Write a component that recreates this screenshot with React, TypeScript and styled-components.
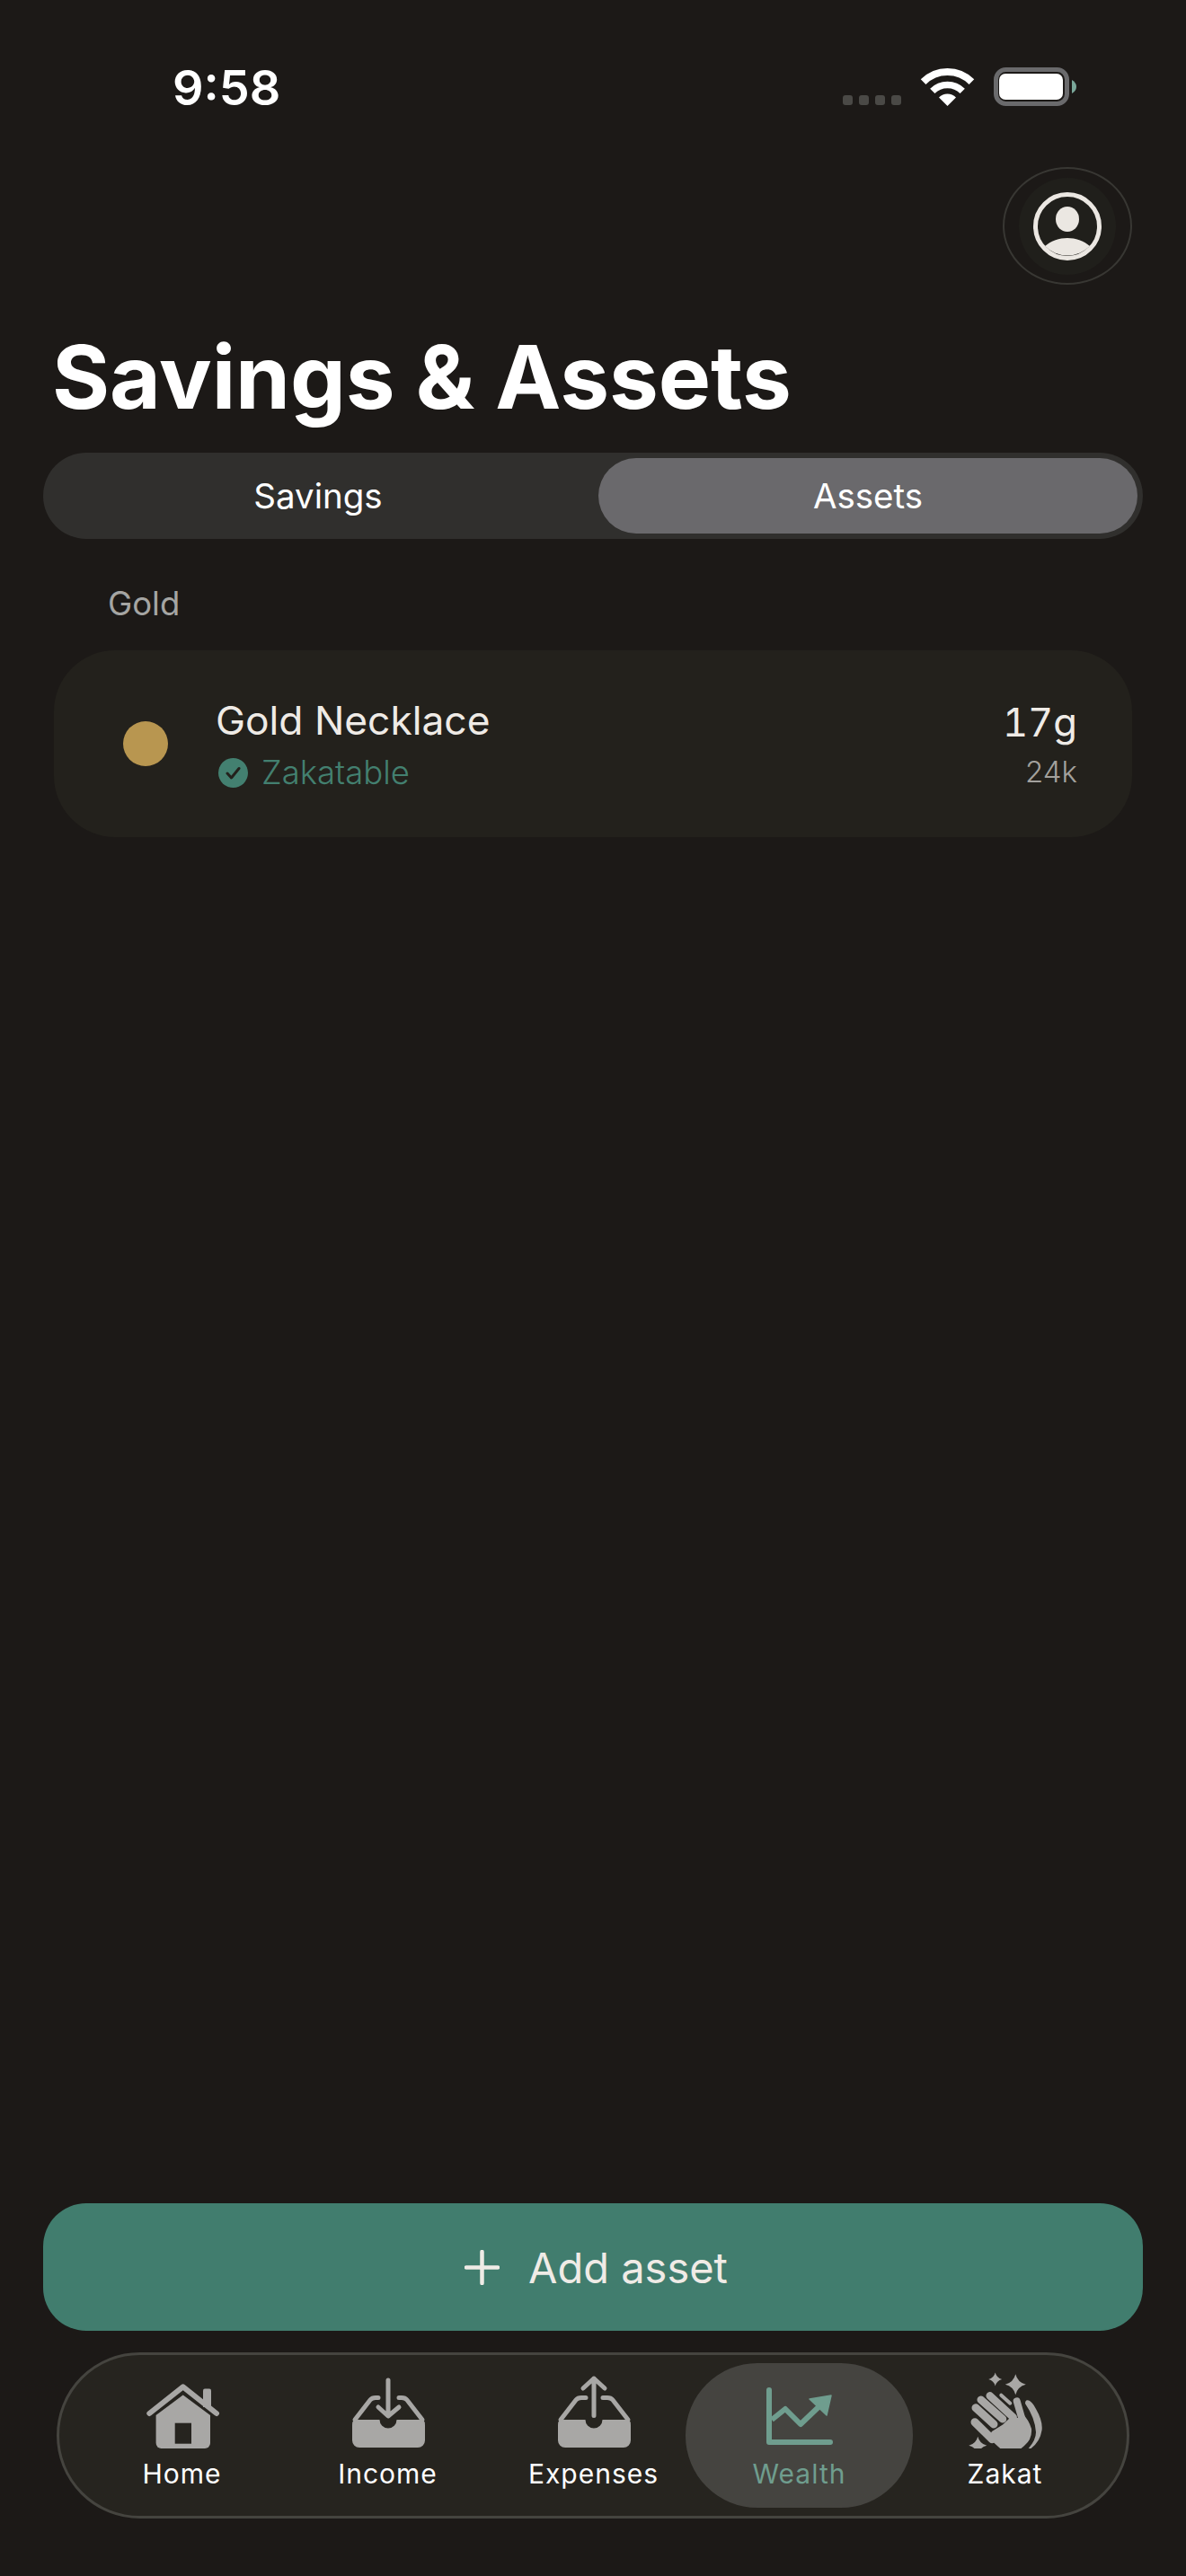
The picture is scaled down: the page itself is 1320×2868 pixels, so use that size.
import React from 'react';
import styled, { createGlobalStyle } from 'styled-components';

const GlobalStyle = createGlobalStyle`
  html, body {
    margin: 0;
    padding: 0;
    background: #1c1917;
  }
  * {
    box-sizing: border-box;
  }
`;

const Page = styled.div`
  width: 1320px;
  height: 2868px;
  display: flex;
  flex-direction: column;
  background: #1c1917;
  font-family: Inter, "Noto Sans", sans-serif;
  overflow: hidden;
`;

const StatusBar = styled.div`
  height: 186px;
  padding: 75px 122px 0 192px;
  display: flex;
  justify-content: space-between;
  align-items: flex-start;
`;

const Time = styled.div`
  font-size: 54px;
  font-weight: 600;
  line-height: 46px;
  color: #fff;
`;

const StatusIcons = styled.div`
  display: flex;
  align-items: flex-end;
  gap: 23px;
  height: 43px;
`;

const SignalDots = styled.div`
  display: flex;
  gap: 7px;
  margin-bottom: 1px;
`;

const SignalDot = styled.span`
  width: 11px;
  height: 11px;
  border-radius: 3px;
  background: #4a4946;
`;

const TopRow = styled.div`
  display: flex;
  justify-content: flex-end;
  padding-right: 60px;
`;

const ProfileButton = styled.div`
  width: 144px;
  height: 131px;
  border-radius: 50%;
  border: 2px solid #383733;
  display: flex;
  align-items: center;
  justify-content: center;
`;

const ProfileInner = styled.div`
  width: 108px;
  height: 108px;
  border-radius: 50%;
  background: #201f1b;
  display: flex;
  align-items: center;
  justify-content: center;
`;

const Title = styled.h1`
  margin: 43px 0 24px;
  padding-left: 58px;
  font-size: 98px;
  font-weight: 700;
  line-height: 120px;
  letter-spacing: -0.15px;
  color: #fff;
`;

const Segment = styled.div`
  margin: 0 48px;
  height: 96px;
  padding: 6px;
  border-radius: 48px;
  background: #302f2d;
  display: grid;
  grid-template-columns: 1fr 1fr;
  gap: 12px;
`;

const SegmentTab = styled.div<{ $active?: boolean }>`
  border-radius: 42px;
  display: flex;
  align-items: center;
  justify-content: center;
  font-size: 38.500px;
  font-weight: 400;
  color: #fff;
  background: ${p => (p.$active ? '#6a696c' : 'transparent')};
`;

const GroupLabel = styled.div`
  margin: 50px 0 30px;
  padding-left: 120px;
  font-size: 36.500px;
  line-height: 44px;
  color: #a5a5a3;
`;

const AssetCard = styled.div`
  margin: 0 60px;
  height: 208px;
  padding: 0 62px 0 77px;
  border-radius: 68px;
  background: #23211c;
  display: flex;
  align-items: center;
`;

const AssetDot = styled.div`
  width: 50px;
  height: 50px;
  border-radius: 50%;
  background: #b89650;
  margin-right: 53px;
`;

const AssetInfo = styled.div`
  flex: 1;
  display: flex;
  flex-direction: column;
  gap: 12px;
`;

const AssetName = styled.div`
  font-size: 44.300px;
  line-height: 52px;
  color: #efebe6;
`;

const ZakatRow = styled.div`
  display: flex;
  align-items: center;
  gap: 15px;
  margin-left: 3px;
  font-size: 36.500px;
  font-weight: 300;
  line-height: 40px;
  color: #438070;
`;

const AssetValues = styled.div`
  display: flex;
  flex-direction: column;
  align-items: flex-end;
  gap: 9px;
  margin-right: -1px;
`;

const Amount = styled.div`
  font-size: 43.500px;
  line-height: 52px;
  font-feature-settings: "tnum";
  color: #efebe6;
`;

const Worth = styled.div`
  font-size: 33px;
  font-weight: 300;
  line-height: 40px;
  color: #a3a19d;
`;

const Spacer = styled.div`
  flex: 1;
`;

const AddButton = styled.div`
  margin: 0 48px;
  height: 142px;
  padding-left: 7px;
  border-radius: 48px;
  background: #417d6e;
  display: flex;
  align-items: center;
  justify-content: center;
  gap: 32px;
  font-size: 47px;
  color: #efebe6;
`;

const BottomNav = styled.div`
  margin: 24px 63px 64px;
  height: 185px;
  padding-left: 22px;
  border: 3px solid #45443f;
  border-radius: 93px;
  background: #26241f;
  display: grid;
  grid-template-columns: repeat(5, 229px);
  align-items: center;
`;

const NavTab = styled.div<{ $active?: boolean }>`
  justify-self: center;
  width: ${p => (p.$active ? 253 : 229)}px;
  height: 161px;
  border-radius: 80px;
  background: ${p => (p.$active ? '#454440' : 'transparent')};
  display: flex;
  flex-direction: column;
  align-items: center;
`;

const NavLabel = styled.div<{ $active?: boolean }>`
  margin-top: 10px;
  font-size: 30px;
  font-weight: 400;
  line-height: 36px;
  letter-spacing: 1px;
  color: ${p => (p.$active ? '#6f9d8e' : '#fff')};
`;

const ICON = '#a8a7a5';
const TEAL = '#6f9d8e';
const NAV_BG = '#26241f';

const NavIcon: React.FC<{ children: React.ReactNode; x: number; y: number }> = ({ children, x, y }) => (
  <svg width="100" height="95" viewBox="0 0 100 95">
    <g transform={`translate(${x} ${y})`}>{children}</g>
  </svg>
);

const HomeIcon = () => (
  <NavIcon x={10} y={23}>
    <path d="M63 7.5 Q63 5.500 65 5.500 H70 Q72 5.500 72 7.500 V26 H63Z" fill={ICON} />
    <path d="M3.300 33 L40.700 3.300 L78 33" fill="none" stroke={ICON} strokeWidth="6" strokeLinecap="round" strokeLinejoin="round" />
    <path d="M10.600 35 L40.700 12.500 L71 35 V66 A6 6 0 0 1 65 72 H16.600 A6 6 0 0 1 10.600 66Z" fill={ICON} />
    <rect x="31.700" y="43.700" width="18.300" height="23" fill={NAV_BG} />
  </NavIcon>
);

const tray = (top: number) =>
  `M2 ${top} H30.500 A9.500 9.500 0 0 0 49.500 ${top} H79 Q81 ${top + 2} 81 ${top + 6} V${top + 23} A8 8 0 0 1 73 ${top + 31} H8 A8 8 0 0 1 0 ${top + 23} V${top + 6} Q0 ${top + 2} 2 ${top}Z`;

const IncomeIcon = () => (
  <NavIcon x={10} y={16}>
    <path d={tray(47)} fill={ICON} />
    <path d="M3 47 L20 25 Q22 22.500 26 22.500 H29 M52 22.500 H55 Q59 22.500 61 25 L78 47" fill="none" stroke={ICON} strokeWidth="5" strokeLinecap="round" />
    <path d="M40 3 V42 M29 33 L40 43 L52 33" fill="none" stroke={ICON} strokeWidth="5" strokeLinecap="round" strokeLinejoin="round" />
  </NavIcon>
);

const ExpensesIcon = () => (
  <NavIcon x={10} y={14}>
    <path d={tray(49)} fill={ICON} />
    <path d="M3 49 L20 27 Q22 24.500 26 24.500 H31 M50 24.500 H55 Q59 24.500 61 27 L78 49" fill="none" stroke={ICON} strokeWidth="5" strokeLinecap="round" />
    <path d="M40 3 V44.500 M28 14 L40 3 L52 14" fill="none" stroke={ICON} strokeWidth="5" strokeLinecap="round" strokeLinejoin="round" />
  </NavIcon>
);

const WealthIcon = () => (
  <NavIcon x={13} y={27}>
    <path d="M3 3 V61 H71" fill="none" stroke={TEAL} strokeWidth="6" strokeLinecap="round" strokeLinejoin="round" />
    <path d="M6 36 L21 24 L38 41 L60 20" fill="none" stroke={TEAL} strokeWidth="6" strokeLinejoin="round" />
    <path d="M48 13 L72 9 L67 31Z" fill={TEAL} stroke={TEAL} strokeWidth="1.500" strokeLinejoin="round" />
  </NavIcon>
);

const sparkle = (cx: number, cy: number, r: number) =>
  `M${cx} ${cy - r} Q${cx + r * 0.2} ${cy - r * 0.2} ${cx + r} ${cy} Q${cx + r * 0.2} ${cy + r * 0.2} ${cx} ${cy + r} Q${cx - r * 0.2} ${cy + r * 0.2} ${cx - r} ${cy} Q${cx - r * 0.2} ${cy - r * 0.2} ${cx} ${cy - r}Z`;

// clapping hands, traced by eye from the reference
const ZakatIcon = () => (
  <NavIcon x={9} y={11}>
    <path d={sparkle(29.700, 7, 7.500)} fill={ICON} />
    <path d={sparkle(52.300, 12.700, 11.500)} fill={ICON} />
    <path d={sparkle(10.300, 80.700, 10)} fill={ICON} />
    <path d="M36.300 24.700 L46.300 33.700" fill="none" stroke={ICON} strokeWidth="4" strokeLinecap="round" />
    <g fill="none" stroke={ICON} strokeLinecap="round">
      <path d="M7 54.700 L26.300 73.700" strokeWidth="9" />
      <path d="M8 38.700 L28 57" strokeWidth="9" />
      <path d="M13.700 29.700 L38 51.300" strokeWidth="8.500" />
      <path d="M23.700 25.300 L49.700 49.300" strokeWidth="8.500" />
      <path d="M53.700 31.300 L59.700 52" strokeWidth="8" />
    </g>
    <path d="M26 65 L38 57.500 L46 50 L54.700 50 L59 44 Q67 52 70 62 Q71 74 62 81 Q56 87 49 88 Q40 89 33 82 L22 72Z" fill={ICON} />
    <path d="M63 34 Q63 29 67 30.500 Q71 32 75 40 Q83 54 81.500 64 Q79 80 63 88 Q75 76 75 66 Q74 50 63 34Z" fill={ICON} />
  </NavIcon>
);

const WifiIcon = () => (
  <svg width="57" height="42" viewBox="0 0 57 42" overflow="visible">
    <path d="M1.600 15.100 A38 38 0 0 1 55.400 15.100" fill="none" stroke="#fff" strokeWidth="8" />
    <path d="M11.800 25.300 A23.600 23.600 0 0 1 45.200 25.300" fill="none" stroke="#fff" strokeWidth="7.500" />
    <path d="M28.500 42 L19 32.500 A13.500 13.500 0 0 1 38 32.500Z" fill="#fff" />
  </svg>
);

const BatteryIcon = () => (
  <svg width="92" height="43" viewBox="0 0 92 43">
    <rect x="2.500" y="2.500" width="79" height="38" rx="11" fill="none" stroke="#6a6a6c" strokeWidth="5" />
    <rect x="6" y="7" width="71" height="29" rx="7" fill="#fff" />
    <path d="M87 14 Q92 17 92 21.500 Q92 26 87 29Z" fill="#7aa79a" />
  </svg>
);

const ProfileIcon = () => (
  <svg width="76" height="76" viewBox="0 0 76 76">
    <circle cx="38" cy="38" r="35.500" fill="none" stroke="#ebe7e2" strokeWidth="5" />
    <ellipse cx="38" cy="30" rx="13" ry="14" fill="#ebe7e2" />
    <path d="M13 60 C20 54 29 51 38 51 C47 51 56 54 63 60 A35 35 0 0 1 13 60Z" fill="#ebe7e2" />
  </svg>
);

const CheckBadge = () => (
  <svg width="33" height="33" viewBox="0 0 33 33">
    <circle cx="16.500" cy="16.500" r="16.500" fill="#438070" />
    <path d="M10 17 L14.500 22 L23 11.500" fill="none" stroke="#23211c" strokeWidth="3" strokeLinecap="round" strokeLinejoin="round" />
  </svg>
);

const PlusIcon = () => (
  <svg width="39" height="39" viewBox="0 0 39 39">
    <path d="M19.500 2 V37 M2 19.500 H37" fill="none" stroke="#efebe6" strokeWidth="4.500" strokeLinecap="round" />
  </svg>
);

const tabs = [
  { label: 'Home', icon: <HomeIcon /> },
  { label: 'Income', icon: <IncomeIcon /> },
  { label: 'Expenses', icon: <ExpensesIcon /> },
  { label: 'Wealth', icon: <WealthIcon />, active: true },
  { label: 'Zakat', icon: <ZakatIcon /> },
];

const App: React.FC = () => {
  return (
    <Page>
      <GlobalStyle />
      <StatusBar>
        <Time>9:58</Time>
        <StatusIcons>
          <SignalDots>
            {[0, 1, 2, 3].map(i => (
              <SignalDot key={i} />
            ))}
          </SignalDots>
          <WifiIcon />
          <BatteryIcon />
        </StatusIcons>
      </StatusBar>
      <TopRow>
        <ProfileButton>
          <ProfileInner>
            <ProfileIcon />
          </ProfileInner>
        </ProfileButton>
      </TopRow>
      <Title>Savings &amp; Assets</Title>
      <Segment>
        <SegmentTab>Savings</SegmentTab>
        <SegmentTab $active>Assets</SegmentTab>
      </Segment>
      <GroupLabel>Gold</GroupLabel>
      <AssetCard>
        <AssetDot />
        <AssetInfo>
          <AssetName>Gold Necklace</AssetName>
          <ZakatRow>
            <CheckBadge />
            Zakatable
          </ZakatRow>
        </AssetInfo>
        <AssetValues>
          <Amount>17g</Amount>
          <Worth>24k</Worth>
        </AssetValues>
      </AssetCard>
      <Spacer />
      <AddButton>
        <PlusIcon />
        Add asset
      </AddButton>
      <BottomNav>
        {tabs.map(tab => (
          <NavTab key={tab.label} $active={tab.active}>
            {tab.icon}
            <NavLabel $active={tab.active}>{tab.label}</NavLabel>
          </NavTab>
        ))}
      </BottomNav>
    </Page>
  );
};

export default App;
